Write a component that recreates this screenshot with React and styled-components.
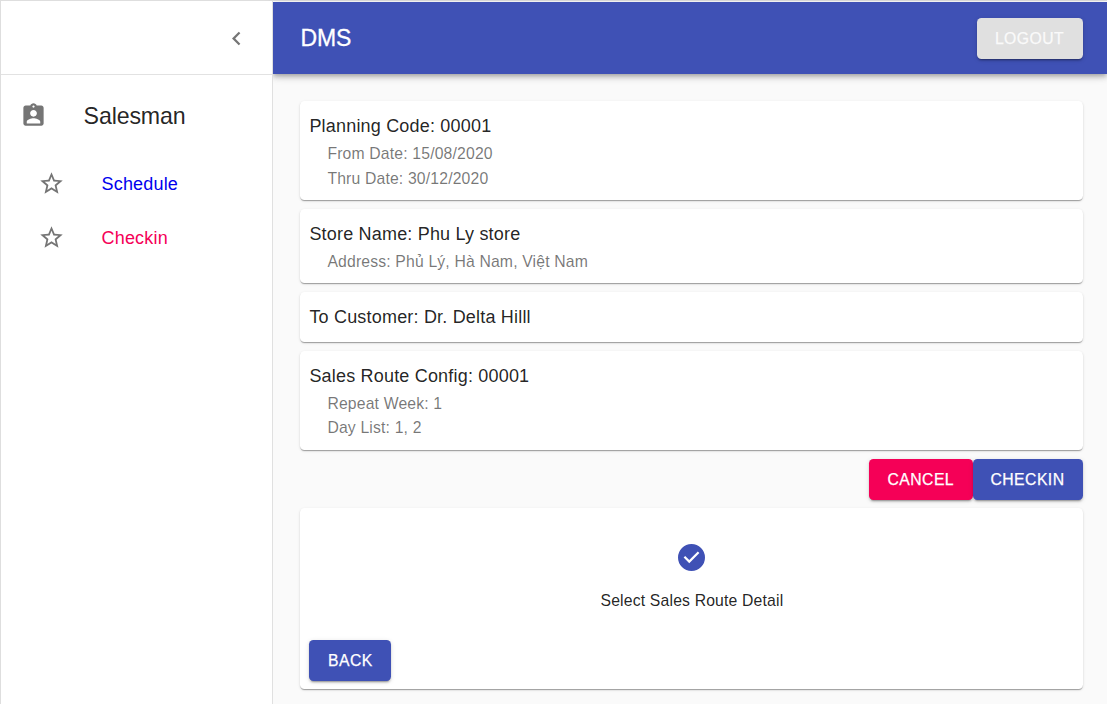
import React from "react";
import styled, { createGlobalStyle } from "styled-components";

const GlobalStyle = createGlobalStyle`
  *, *::before, *::after { box-sizing: border-box; }
  body {
    margin: 0;
    background: #fafafa;
    color: rgba(0, 0, 0, 0.87);
    font-family: "Liberation Sans", Arial, Helvetica, sans-serif;
    overflow: hidden;
  }
`;

const Page = styled.div`
  display: flex;
  height: 704px;
  border-top: 1px solid #dedede;
  border-left: 1px solid #dedede;
`;

const Sidebar = styled.aside`
  position: relative;
  z-index: 1;
  flex: none;
  width: 272px;
  background: #fff;
  border-right: 1px solid #e0e0e0;
`;

const SidebarHeader = styled.div`
  display: flex;
  align-items: center;
  justify-content: flex-end;
  height: 74px;
  padding: 1px 22.4px 0 0;
  border-bottom: 1px solid #e2e2e2;
`;

const Glyph = styled.svg`
  display: block;
  flex: none;
  width: 27px;
  height: 27px;
  fill: ${(p) => p.$color || "#757575"};
`;

const MenuGroup = styled.div`
  display: flex;
  align-items: center;
  height: 63px;
  margin-top: 9px;
  padding-left: 19px;
`;

const GroupLabel = styled.span`
  margin-left: 36.6px;
  padding-top: 1px;
  font-size: 23.2px;
  letter-spacing: -0.15px;
  line-height: 36px;
`;

const MenuItem = styled.div`
  display: flex;
  align-items: center;
  height: 54px;
  padding-left: 37px;
`;

const MenuLabel = styled.span`
  margin-left: 36.6px;
  padding-top: 2px;
  font-size: 18px;
  letter-spacing: 0.17px;
  line-height: 27px;
  color: ${(p) => p.$color};
`;

const Menu = styled.nav`
  display: flex;
  flex-direction: column;
`;

const MenuList = styled.div`
  margin-top: 9px;
`;

const Main = styled.main`
  flex: 1;
  min-width: 0;
  padding-top: 1px;
  background: #fff;
`;

const AppBar = styled.header`
  position: relative;
  display: flex;
  align-items: center;
  justify-content: space-between;
  height: 72px;
  padding: 0 24.5px 0 27.5px;
  background: #3f51b5;
  color: #fff;
  box-shadow: 0 2px 4px -1px rgba(0, 0, 0, 0.2), 0 4px 5px 0 rgba(0, 0, 0, 0.14),
    0 1px 11px 0 rgba(0, 0, 0, 0.12);
`;

const Brand = styled.h1`
  margin: 0;
  font-size: 23px;
  font-weight: 400;
  letter-spacing: -0.1px;
  line-height: 36px;
  -webkit-text-stroke: 0.3px currentColor;
`;

const palette = {
  primary: ["#3f51b5", "#fff"],
  secondary: ["#f50057", "#fff"],
  muted: ["#e0e0e0", "#fafafa"],
};

const Button = styled.button`
  height: 41px;
  width: ${(p) => p.$width}px;
  padding: 0;
  border: 0;
  border-radius: 4.5px;
  background: ${(p) => palette[p.$tone][0]};
  color: ${(p) => palette[p.$tone][1]};
  font-family: inherit;
  font-size: 15.75px;
  letter-spacing: 0.45px;
  line-height: 27px;
  -webkit-text-stroke: 0.25px currentColor;
  box-shadow: 0 3px 1px -2px rgba(0, 0, 0, 0.2), 0 2px 2px 0 rgba(0, 0, 0, 0.14),
    0 1px 5px 0 rgba(0, 0, 0, 0.12);
`;

const Content = styled.div`
  display: flex;
  flex-direction: column;
  gap: 9px;
  height: 630px;
  padding: 27px 24.5px 0 27.4px;
  background: #fafafa;
`;

const Card = styled.section`
  flex: none;
  height: ${(p) => p.$height}px;
  padding: 12px 9px 0;
  border-radius: 4.5px;
  background: #fff;
  box-shadow: 0 2px 1px -1px rgba(0, 0, 0, 0.2), 0 1px 1px 0 rgba(0, 0, 0, 0.14),
    0 1px 3px 0 rgba(0, 0, 0, 0.12);
`;

const CardTitle = styled.div`
  margin-bottom: ${(p) => p.$gap}px;
  font-size: 18px;
  letter-spacing: 0.19px;
  line-height: 27px;
`;

const CardLine = styled.div`
  padding-left: 18px;
  font-size: 15.75px;
  letter-spacing: 0.16px;
  line-height: ${(p) => p.$leading}px;
  color: rgba(0, 0, 0, 0.54);
`;

const Actions = styled.div`
  display: flex;
  flex: none;
  justify-content: flex-end;
  height: 40px;
`;

const Stepper = styled.div`
  display: flex;
  flex-direction: column;
  align-items: center;
  height: 120px;
  padding: 24px 0 0 1px;
`;

const StepLabel = styled.div`
  margin-top: 18px;
  font-size: 15.75px;
  letter-spacing: 0.17px;
  line-height: 23px;
`;

const Icon = ({ d, color }) => (
  <Glyph viewBox="0 0 24 24" $color={color} aria-hidden="true">
    <path d={d} />
  </Glyph>
);

const icons = {
  chevron: "M15.41 7.41L14 6l-6 6 6 6 1.41-1.41L10.83 12z",
  badge:
    "M19 3h-4.18C14.4 1.84 13.3 1 12 1c-1.3 0-2.4.84-2.82 2H5c-1.1 0-2 .9-2 2v14c0 1.1.9 2 2 2h14c1.1 0 2-.9 2-2V5c0-1.1-.9-2-2-2zm-7 0c.55 0 1 .45 1 1s-.45 1-1 1-1-.45-1-1 .45-1 1-1zm0 4c1.66 0 3 1.34 3 3s-1.34 3-3 3-3-1.34-3-3 1.34-3 3-3zm6 12H6v-1.4c0-2 4-3.1 6-3.1s6 1.1 6 3.1V19z",
  star: "M22 9.24l-7.19-.62L12 2 9.19 8.63 2 9.24l5.46 4.73L5.82 21 12 17.27 18.18 21l-1.63-7.03L22 9.24zM12 15.4l-3.76 2.27 1-4.28-3.32-2.88 4.38-.38L12 6.1l1.71 4.04 4.38.38-3.32 2.88 1 4.28L12 15.4z",
  done: "M12 0a12 12 0 1 0 0 24 12 12 0 0 0 0-24zm-2 17l-5-5 1.4-1.4 3.6 3.6 7.6-7.6L19 8l-9 9z",
};

const details = [
  {
    title: "Planning Code: 00001",
    lines: ["From Date: 15/08/2020", "Thru Date: 30/12/2020"],
    height: 99,
    gap: 1,
    leading: 25,
  },
  {
    title: "Store Name: Phu Ly store",
    lines: ["Address: Phủ Lý, Hà Nam, Việt Nam"],
    height: 74,
    gap: 1,
    leading: 25,
  },
  { title: "To Customer: Dr. Delta Hilll", lines: [], height: 50, gap: 0 },
  {
    title: "Sales Route Config: 00001",
    lines: ["Repeat Week: 1", "Day List: 1, 2"],
    height: 99,
    gap: 2,
    leading: 24,
  },
];

export default function App() {
  return (
    <>
      <GlobalStyle />
      <Page>
        <Sidebar>
          <SidebarHeader>
            <Icon d={icons.chevron} />
          </SidebarHeader>
          <Menu>
            <MenuGroup>
              <Icon d={icons.badge} />
              <GroupLabel>Salesman</GroupLabel>
            </MenuGroup>
            <MenuList>
              <MenuItem>
                <Icon d={icons.star} />
                <MenuLabel $color="#0000ee">Schedule</MenuLabel>
              </MenuItem>
              <MenuItem>
                <Icon d={icons.star} />
                <MenuLabel $color="#f50057">Checkin</MenuLabel>
              </MenuItem>
            </MenuList>
          </Menu>
        </Sidebar>
        <Main>
          <AppBar>
            <Brand>DMS</Brand>
            <Button $tone="muted" $width={106}>LOGOUT</Button>
          </AppBar>
          <Content>
            {details.map(({ title, lines, height, gap, leading }) => (
              <Card key={title} $height={height}>
                <CardTitle $gap={gap}>{title}</CardTitle>
                {lines.map((line) => (
                  <CardLine key={line} $leading={leading}>{line}</CardLine>
                ))}
              </Card>
            ))}
            <Actions>
              <Button $tone="secondary" $width={103.5}>CANCEL</Button>
              <Button $tone="primary" $width={110}>CHECKIN</Button>
            </Actions>
            <Card $height={181}>
              <Stepper>
                <Icon d={icons.done} color="#3f51b5" />
                <StepLabel>Select Sales Route Detail</StepLabel>
              </Stepper>
              <Button $tone="primary" $width={82}>BACK</Button>
            </Card>
          </Content>
        </Main>
      </Page>
    </>
  );
}
